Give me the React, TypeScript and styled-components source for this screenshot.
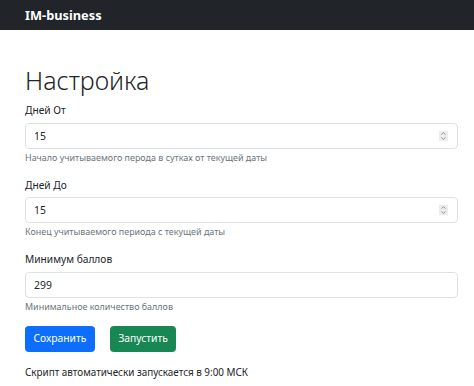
import styled, { createGlobalStyle } from "styled-components";

const GlobalStyle = createGlobalStyle`
  html, body {
    margin: 0;
    padding: 0;
    background: #fff;
  }
  body {
    font-family: "Noto Sans", "Open Sans", sans-serif;
    font-size: 10.2px;
    line-height: 1.5;
    color: #212529;
  }
  * {
    box-sizing: border-box;
  }
`;

const Navbar = styled.nav`
  height: 30px;
  background: #212529;
  display: flex;
  align-items: center;
  padding: 0 25px;
`;

const Brand = styled.span`
  color: #fff;
  font-weight: 700;
  font-size: 12.8px;
  line-height: 1;
`;

const Container = styled.main`
  padding: 30px 16px 0 25px;
`;

const Title = styled.h1`
  margin: 0 0 2px;
  font-size: 25px;
  font-weight: 300;
  line-height: 40px;
  color: #212529;
`;

const Field = styled.div`
  margin-bottom: 11px;
`;

const Label = styled.label`
  display: block;
  margin-bottom: 4px;
  font-size: 10.2px;
  line-height: 16.8px;
`;

const InputWrap = styled.div`
  position: relative;
`;

const Input = styled.input`
  display: block;
  width: 100%;
  height: 26px;
  padding: 0 8px;
  font: inherit;
  font-size: 10.4px;
  color: #212529;
  background: #fff;
  border: 1px solid #dee2e6;
  border-radius: 4px;
  outline: none;
`;

const Spinner = styled.svg`
  position: absolute;
  right: 10px;
  top: 50%;
  transform: translateY(-50%);
`;

const Help = styled.div`
  margin-top: 2px;
  font-size: 8.95px;
  line-height: 14.7px;
  color: #6c757d;
`;

const Actions = styled.div`
  display: flex;
  gap: 15px;
  margin-top: 6px;
`;

const Button = styled.button<{ $variant: "primary" | "success" }>`
  height: 26px;
  padding: 0 8.5px;
  font: inherit;
  font-size: 10.3px;
  color: #fff;
  border: none;
  border-radius: 4px;
  background: ${({ $variant }) => ($variant === "primary" ? "#0d6efd" : "#198754")};
  cursor: pointer;
`;

const Note = styled.p`
  margin: 12px 0 0;
  font-size: 9.9px;
  line-height: 16.8px;
`;

function SpinIcon() {
  return (
    <Spinner width="9" height="11" viewBox="0 0 9 11">
      <rect width="9" height="11" fill="#ececec" />
      <path d="M2.5 4 L4.5 2.2 L6.5 4" fill="none" stroke="#8a8a8a" strokeWidth="0.9" />
      <path d="M2.5 7 L4.5 8.8 L6.5 7" fill="none" stroke="#8a8a8a" strokeWidth="0.9" />
    </Spinner>
  );
}

const fields = [
  { label: "Дней От", value: "15", help: "Начало учитываемого перода в сутках от текущей даты", spin: true },
  { label: "Дней До", value: "15", help: "Конец учитываемого периода с текущей даты", spin: true },
  { label: "Минимум баллов", value: "299", help: "Минимальное количество баллов", spin: false },
];

export default function App() {
  return (
    <>
      <GlobalStyle />
      <Navbar>
        <Brand>IM-business</Brand>
      </Navbar>
      <Container>
        <Title>Настройка</Title>
        {fields.map((f) => (
          <Field key={f.label}>
            <Label>{f.label}</Label>
            <InputWrap>
              <Input type="text" defaultValue={f.value} />
              {f.spin && <SpinIcon />}
            </InputWrap>
            <Help>{f.help}</Help>
          </Field>
        ))}
        <Actions>
          <Button $variant="primary">Сохранить</Button>
          <Button $variant="success">Запустить</Button>
        </Actions>
        <Note>Скрипт автоматически запускается в 9:00 МСК</Note>
      </Container>
    </>
  );
}
